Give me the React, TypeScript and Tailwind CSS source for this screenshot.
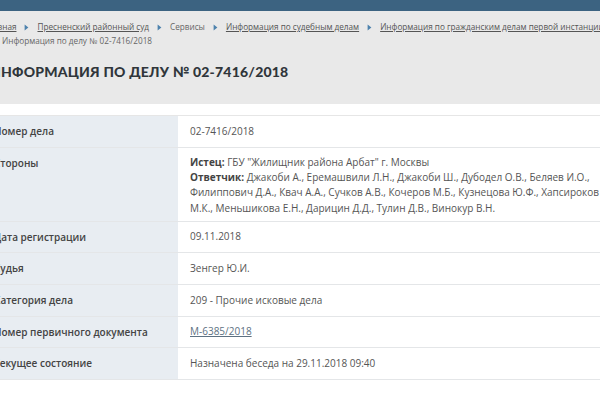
import React from 'react';

const Chevron = () => (
  <svg width="5" height="7" viewBox="0 0 5 7" className="mx-[8px] shrink-0">
    <path d="M0.6 0.4 L4.4 3.5 L0.6 6.6 Z" fill="#4d82ad" />
  </svg>
);

const crumbs = [
  { text: 'Главная', link: true },
  { text: 'Пресненский районный суд', link: true },
  { text: 'Сервисы', link: false },
  { text: 'Информация по судебным делам', link: true },
  { text: 'Информация по гражданским делам первой инстанции', link: true },
];

type Row = { label: string; value: React.ReactNode; tall?: boolean };

const rows: Row[] = [
  { label: 'Номер дела', value: '02-7416/2018' },
  {
    label: 'Стороны',
    tall: true,
    value: (
      <>
        <b className="font-bold text-[#444]">Истец:</b> ГБУ "Жилищник района Арбат" г. Москвы
        <br />
        <b className="font-bold text-[#444]">Ответчик:</b> Джакоби А., Еремашвили Л.Н., Джакоби Ш., Дубодел О.В., Беляев И.О.,
        <br />
        Филиппович Д.А., Квач А.А., Сучков А.В., Кочеров М.Б., Кузнецова Ю.Ф., Хапсироков
        <br />
        М.К., Меньшикова Е.Н., Дарицин Д.Д., Тулин Д.В., Винокур В.Н.
      </>
    ),
  },
  { label: 'Дата регистрации', value: '09.11.2018' },
  { label: 'Судья', value: 'Зенгер Ю.И.' },
  { label: 'Категория дела', value: '209 - Прочие исковые дела' },
  {
    label: 'Номер первичного документа',
    value: <span className="underline text-[#5d7182]">М-6385/2018</span>,
  },
  { label: 'Текущее состояние', value: 'Назначена беседа на 29.11.2018 09:40' },
];

export default function App() {
  return (
    <div className="w-[600px] h-[400px] overflow-hidden bg-white font-['Open_Sans',sans-serif] text-[#555]">
      <div className="h-[11px] bg-[#3c6381]" />

      {/* Header: breadcrumbs + title */}
      <div className="h-[93px] bg-[#e9e9e9]">
        <div className="-ml-[18px] w-[700px] pt-[9px] text-[8.2px] leading-[14px]">
          <div className="flex items-center whitespace-nowrap pl-[2px]">
            {crumbs.map((c, i) => (
              <React.Fragment key={c.text}>
                {i > 0 && <Chevron />}
                <span className={c.link ? 'underline text-[#555]' : 'text-[#666]'}>{c.text}</span>
              </React.Fragment>
            ))}
          </div>
          <div className="flex items-center whitespace-nowrap pl-[20px] text-[#666]">
            Информация по делу № 02-7416/2018
          </div>
          <h1 className="mt-[14px] pl-[8px] font-['Lato',sans-serif] text-[14px] font-black leading-[20px] tracking-[0.2px] text-[#30363b] uppercase">
            Информация по делу № 02-7416/2018
          </h1>
        </div>
      </div>

      {/* Case table */}
      <div className="pt-[11px]">
        <div className="-ml-[18px] w-[700px] border-t border-[#e6e6e6] text-[10px]">
          {rows.map((r) => (
            <div
              key={r.label}
              className={`flex border-b border-[#e4e6e8] ${r.tall ? 'h-[74px]' : 'h-[31.7px]'}`}
            >
              <div
                className={`w-[196px] shrink-0 bg-[#e8edf2] pl-[12px] font-semibold text-[#444] ${
                  r.tall ? 'pt-[8px]' : 'flex items-center'
                }`}
              >
                {r.label}
              </div>
              <div
                className={`flex-1 pl-[12px] leading-[15.3px] ${r.tall ? 'pt-[7px] whitespace-nowrap' : 'flex items-center'}`}
              >
                <div>{r.value}</div>
              </div>
            </div>
          ))}
        </div>
      </div>
    </div>
  );
}
